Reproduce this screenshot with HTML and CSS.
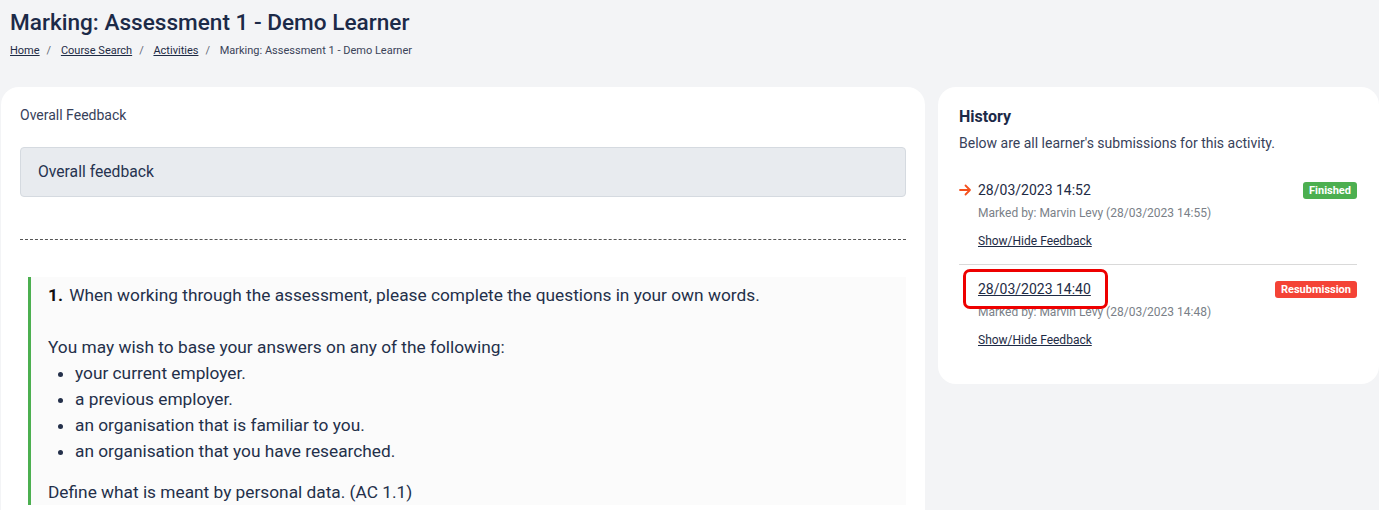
FILE: index.html
```html
<!DOCTYPE html>
<html lang="en">
<head>
    <meta charset="UTF-8">
    <title>Marking: Assessment 1 - Demo Learner</title>
    <link rel="stylesheet" href="styles.css">
</head>
<body>
    <div class="page-header">
        <h1>Marking: Assessment 1 - Demo Learner</h1>
        <nav class="breadcrumb">
            <a href="#">Home</a><span class="sep">/</span>
            <a href="#">Course Search</a><span class="sep">/</span>
            <a href="#">Activities</a><span class="sep">/</span>
            <span>Marking: Assessment 1 - Demo Learner</span>
        </nav>
    </div>

    <div class="layout">
        <div class="card main-card">
            <div class="field-label">Overall Feedback</div>
            <div class="feedback-box">Overall feedback</div>
            <hr class="dashed">

            <div class="question">
                <p class="question-title"><strong>1.</strong> When working through the assessment, please complete the questions in your own words.</p>
                <p class="question-lead">You may wish to base your answers on any of the following:</p>
                <ul>
                    <li>your current employer.</li>
                    <li>a previous employer.</li>
                    <li>an organisation that is familiar to you.</li>
                    <li>an organisation that you have researched.</li>
                </ul>
                <p class="question-ask">Define what is meant by personal data. (AC 1.1)</p>
            </div>
        </div>

        <div class="card history-card">
            <h3>History</h3>
            <p class="history-sub">Below are all learner's submissions for this activity.</p>

            <div class="submission">
                <div class="submission-top">
                    <span class="current-arrow">
                        <svg width="13" height="12" viewBox="0 0 13 12"><path d="M1 6h10M6.5 1.5L11 6l-4.5 4.5" fill="none" stroke="#f4511e" stroke-width="1.8" stroke-linecap="round" stroke-linejoin="round"/></svg>
                    </span>
                    <span class="submission-date">28/03/2023 14:52</span>
                    <span class="badge badge-green">Finished</span>
                </div>
                <div class="marked-by">Marked by: Marvin Levy (28/03/2023 14:55)</div>
                <a href="#" class="toggle-link">Show/Hide Feedback</a>
            </div>

            <div class="submission">
                <div class="submission-top">
                    <a href="#" class="submission-date linked">28/03/2023 14:40</a>
                    <span class="badge badge-red">Resubmission</span>
                </div>
                <div class="marked-by">Marked by: Marvin Levy (28/03/2023 14:48)</div>
                <a href="#" class="toggle-link">Show/Hide Feedback</a>
            </div>
        </div>
    </div>
</body>
</html>
```

FILE: styles.css
```css
body {
    font-family: Roboto, "Liberation Sans", Arial, sans-serif;
    background-color: #f3f4f6;
    color: #1e2b45;
    margin: 0;
    overflow: hidden;
}

.page-header {
    padding: 8px 10px 0 10px;
}

h1 {
    font-size: 22.6px;
    font-weight: 500;
    color: #1c2a48;
    margin: 0;
    line-height: 30px;
}

.breadcrumb {
    font-size: 11px;
    color: #3a4358;
    margin-top: 6px;
    line-height: 14px;
}

.breadcrumb a {
    color: #1e2b45;
    text-decoration: underline;
}

.breadcrumb .sep {
    color: #5f6675;
    margin: 0 7px;
}

.layout {
    display: grid;
    grid-template-columns: 924px 441px;
    column-gap: 13px;
    margin-top: 29px;
    padding-left: 1px;
    align-items: start;
}

.card {
    background-color: #fff;
    border-radius: 18px;
}

.main-card {
    padding: 19px 19px 0 19px;
    height: 440px;
    box-sizing: border-box;
}

.field-label {
    font-size: 14px;
    color: #37415a;
    line-height: 18px;
}

.feedback-box {
    margin-top: 23px;
    background-color: #e8ebef;
    border: 1px solid #d5dae0;
    border-radius: 4px;
    font-size: 15.7px;
    color: #263350;
    padding: 14px 17px;
    line-height: 20px;
}

hr.dashed {
    border: none;
    border-top: 1px dashed #555;
    margin: 42px 0 37px 0;
}

.question {
    margin-left: 8px;
    border-left: 3px solid #4caf50;
    background-color: #fbfbfb;
    padding: 5px 17px 0 17px;
    font-size: 17.3px;
    color: #24304a;
    line-height: 26px;
}

.question p {
    margin: 0;
}

.question-title strong {
    color: #111;
    margin-right: 2px;
}

.question-lead {
    padding-top: 26px;
}

.question ul {
    margin: 0 0 15px 0;
    padding-left: 27px;
}

.history-card {
    padding: 19px 22px 21px 21px;
}

.history-card h3 {
    font-size: 16px;
    font-weight: 700;
    color: #1c2a48;
    margin: 0;
    line-height: 22px;
}

.history-sub {
    font-size: 14px;
    color: #37415a;
    margin: 6px 0 28px 0;
    line-height: 18px;
}

.submission {
    padding-bottom: 15px;
}

.submission + .submission {
    border-top: 1px solid #d9d9d9;
    padding-top: 14px;
}

.submission-top {
    display: flex;
    align-items: center;
    height: 20px;
}

.current-arrow {
    width: 19px;
    display: flex;
    align-items: center;
}

.submission-date {
    font-size: 14px;
    color: #1e2b45;
    margin-right: auto;
}

.submission-date.linked {
    margin-left: 19px;
    text-decoration: underline;
    position: relative;
}

.submission-date.linked::after {
    content: "";
    position: absolute;
    left: -15px;
    right: -17px;
    top: -12px;
    bottom: -12px;
    border: 3px solid #ee0000;
    border-radius: 7px;
}

.badge {
    font-size: 11px;
    font-weight: 700;
    color: #fff;
    border-radius: 3px;
    padding: 2px 6px;
    line-height: 13px;
}

.badge-green {
    background-color: #4caf50;
}

.badge-red {
    background-color: #f44336;
}

.marked-by {
    font-size: 12px;
    color: #7a7f88;
    margin: 5px 0 0 19px;
    line-height: 16px;
}

.toggle-link {
    display: inline-block;
    font-size: 12px;
    color: #1e2b45;
    text-decoration: underline;
    margin: 12px 0 0 19px;
    line-height: 16px;
}
```
